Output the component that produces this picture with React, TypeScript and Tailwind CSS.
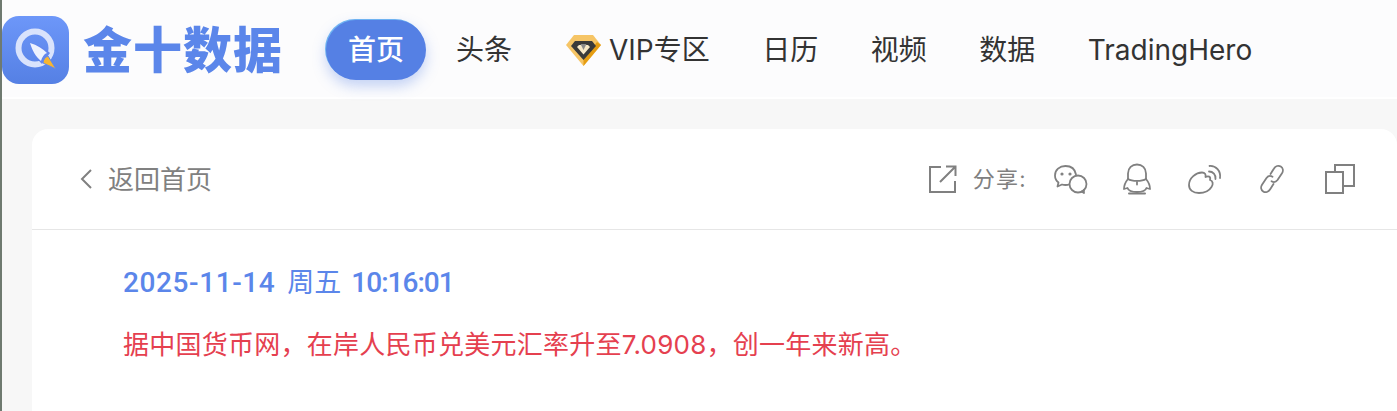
const cjk = "font-['Inter','Noto_Sans_CJK_SC',sans-serif]";

function Logo() {
  return (
    <svg width="67" height="68" viewBox="0 0 67 68">
      <defs>
        <linearGradient id="logoBg" x1="0" y1="0" x2="0" y2="1">
          <stop offset="0" stopColor="#6d97f9" />
          <stop offset="1" stopColor="#5580e4" />
        </linearGradient>
      </defs>
      <rect width="67" height="68" rx="17" fill="url(#logoBg)" />
      <circle cx="33" cy="32" r="16.500" fill="none" stroke="#d9e3fc" strokeWidth="6" />
      <path d="M28 27 C35 28 43 32 48 37 L40 48 C34 42 29 35 28 27Z" fill="#6387ee" />
      <path d="M28 27 C35 29 41 33 45 37 C42 38 40 41 39 45 C34 41 30 34 28 27Z" fill="#edf2fe" />
      <path d="M46 40 C43 41 41 44 41 47 L54 53 Z" fill="#f7b531" stroke="#5f88ea" strokeWidth="1" />
    </svg>
  );
}

function VipIcon() {
  return (
    <svg width="35" height="32" viewBox="0 0 35 32">
      <path d="M8 1 H27 L35 11 L17.500 32 L0 11 Z" fill="#f6c566" />
      <path d="M17.500 32 L35 11 L31 8 L17.500 25 Z" fill="#e59d12" />
      <path d="M9 7 H26 L30 12 L17.500 26 L5 12 Z" fill="#3a3a3a" />
      <path d="M13 11 H22 L24 13 L17.500 20.500 L11 13 Z" fill="#f8e9c8" />
      <path d="M14.500 10 H20.500 L17.500 16 Z" fill="#8a8a8a" />
    </svg>
  );
}

function ShareIcons() {
  const common = { fill: 'none', stroke: '#808080', strokeWidth: 1.8, strokeLinecap: 'round' as const, strokeLinejoin: 'round' as const };
  return (
    <div className="flex items-center">
      {/* wechat */}
      <svg width="34" height="30" viewBox="0 0 34 30" className="ml-[27px]" {...common}>
        <path d="M15 20.500 C14 21 13 21 11.500 21 C10 21 9 20.800 8 20.500 L3.500 22.500 L4.500 18.500 C2.200 16.800 1 14.500 1 11.500 C1 6 5.500 2 11.500 2 C17 2 21 5 22 10.500" />
        <circle cx="24" cy="20" r="8.500" />
        <path d="M27.500 27.500 L30 29 L29.800 26" />
        <circle cx="8" cy="10" r="0.700" fill="#808080" />
        <circle cx="16" cy="10" r="0.700" fill="#808080" />
      </svg>
      {/* qq */}
      <svg width="30" height="32" viewBox="0 0 30 32" className="ml-[34px]" {...common}>
        <path d="M6 16 V10.500 C6 5 10 1.500 15 1.500 C20 1.500 24 5 24 10.500 V16" />
        <path d="M6 16 C3.500 19 2 22 2 26 L5.500 25 C6.500 28 10 29 15 29 C20 29 23.500 28 24.500 25 L28 26 C28 22 26.500 19 24 16" />
        <path d="M6 16 C10 18.500 20 18.500 24 16" />
        <path d="M15 19 V21.500" />
        <path d="M7 30.500 H23" strokeWidth="2" />
      </svg>
      {/* weibo */}
      <svg width="34" height="30" viewBox="0 0 34 30" className="ml-[36px]" {...common}>
        <path d="M1 21 C1 14 8 8.500 14 8.500 C17 8.500 18 10.500 17.500 13 C20.500 11.500 23 12.500 22 16 C25 17 25.500 20 23.500 23 C21 27 16 29 11 29 C5 29 1 26 1 21Z" />
        <path d="M21 7.500 C25 7.500 28 10.500 27.500 15" />
        <path d="M21.500 2 C28 1.500 33 7 32 14" />
      </svg>
      {/* link */}
      <svg width="24" height="30" viewBox="0 0 24 30" className="ml-[38px]" {...common}>
        <path d="M10.500 10 L14 4.500 C15.500 2 18.500 1 20.800 2.500 C23 4 23.500 6.800 22 9.200 L17.500 16 C16 18 13.500 18.500 11.500 17.200" />
        <path d="M13.500 20 L10 25.500 C8.500 28 5.500 29 3.200 27.500 C1 26 0.500 23.200 2 20.800 L6.500 14 C8 12 10.500 11.500 12.500 12.800" />
      </svg>
      {/* copy */}
      <svg width="32" height="32" viewBox="0 0 32 32" className="ml-[40px]" fill="none" stroke="#808080" strokeWidth="2">
        <rect x="2" y="9" width="17" height="21" />
        <path d="M11 9 V2 H30 V23 H19" />
      </svg>
    </div>
  );
}

export default function App() {
  return (
    <div className={`${cjk} h-[411px] w-[1397px] overflow-hidden border-l-2 border-[#6f7a70] bg-[#f7f7f7]`}>
      <header className="flex h-[99px] items-center border-b-2 border-white bg-[#fcfcfd] pt-[3px]">
        <Logo />
        <div className="ml-[14px] w-[200px] text-[49px] leading-none font-black tracking-[1px] whitespace-nowrap text-[#5b86ea]">金十数据</div>
        <nav className="ml-[43px] flex items-center gap-[52.5px] text-[28px] text-[#333]">
          <span className="-mr-[22.5px] flex h-[60px] w-[100px] items-center justify-center rounded-full bg-[#5580e4] font-medium text-white shadow-[-1px_-1px_0_#6fb3f2,0_6px_14px_rgba(85,128,228,0.35)]">首页</span>
          <span>头条</span>
          <span className="ml-[1.5px] flex items-center whitespace-nowrap">
            <span className="mr-[8px]"><VipIcon /></span>
            VIP专区
          </span>
          <span>日历</span>
          <span>视频</span>
          <span>数据</span>
          <span>TradingHero</span>
        </nav>
      </header>
      <main className="pt-[30px] pl-[30px]">
        <section className="h-[300px] rounded-[16px] bg-white">
          <div className="flex h-[101px] items-center justify-between border-b border-[#e6e6e6]">
            <div className="ml-[48px] flex items-center text-[26px] text-[#808080]">
              <svg width="12" height="20" viewBox="0 0 12 20" fill="none" stroke="#808080" strokeWidth="2" className="mr-[16px]">
                <path d="M11 1 L2 10 L11 19" />
              </svg>
              <span>返回首页</span>
            </div>
            <div className="mr-[41px] flex items-center">
              <svg width="28" height="28" viewBox="0 0 28 28" fill="none" stroke="#808080" strokeWidth="2">
                <path d="M12 2 H1 V27 H26 V16" />
                <path d="M11 17 L26 2 M17 1.500 H26.500 V11" />
              </svg>
              <span className="ml-[16px] text-[22px] tracking-[1.3px] text-[#808080]">分享:</span>
              <ShareIcons />
            </div>
          </div>
          <div className="pt-[35px] pl-[91px]">
            <p className="flex gap-[12px] font-['Roboto','Noto_Sans_CJK_SC',sans-serif] text-[28px] leading-[36px] font-medium text-[#5b86ea]">
              <span className="tracking-[0.6px]">2025-11-14</span>
              <span className="text-[27px] font-normal">周五</span>
              <span className="-ml-[2px] tracking-[-1px]">10:16:01</span>
            </p>
            <p className="mt-[26px] text-[26px] leading-[36px] tracking-[0.25px] text-[#e5404f]">
              据中国货币网，在岸人民币兑美元汇率升至7.0908，创一年来新高。
            </p>
          </div>
        </section>
      </main>
    </div>
  );
}
